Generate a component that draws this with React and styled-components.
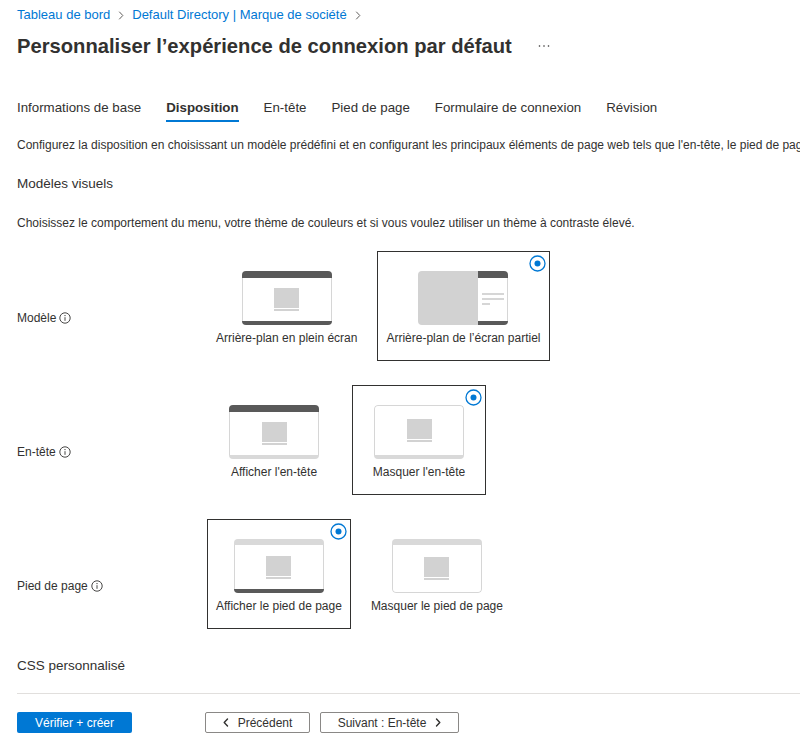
import React from 'react';
import styled, { createGlobalStyle } from 'styled-components';

const GlobalStyle = createGlobalStyle`
  html, body { margin: 0; padding: 0; background: #fff; overflow: hidden; }
  body { font-family: "Liberation Sans", Arial, sans-serif; color: #323130; }
  * { box-sizing: border-box; }
`;

const Page = styled.div`
  width: 1000px;
  padding: 6px 0 0 17px;
`;

const Breadcrumb = styled.nav`
  display: flex;
  align-items: center;
  gap: 8px;
  font-size: 13px;
  line-height: 18px;
  color: #0078d4;
`;

const Crumb = styled.span`
  white-space: nowrap;
`;

const TitleRow = styled.div`
  display: flex;
  align-items: center;
  gap: 26px;
  margin-top: 8px;
`;

const Title = styled.h1`
  margin: 0;
  font-size: 20.2px;
  line-height: 28px;
  font-weight: 600;
  color: #323130;
  white-space: nowrap;
`;

const Tabs = styled.div`
  display: flex;
  gap: 25px;
  margin-top: 39px;
`;

const Tab = styled.div`
  font-size: 13.3px;
  line-height: 18px;
  padding-bottom: 3px;
  border-bottom: 2px solid ${p => (p.$active ? '#0078d4' : 'transparent')};
  font-weight: ${p => (p.$active ? 600 : 400)};
  color: #323130;
  white-space: nowrap;
`;

const Description = styled.p`
  margin: 15px 0 0;
  font-size: 12px;
  line-height: 16px;
  white-space: nowrap;
`;

const SectionTitle = styled.h2`
  margin: ${p => p.$mt}px 0 0;
  font-size: 13.5px;
  line-height: 20px;
  font-weight: 400;
  color: #323130;
`;

const Hint = styled.p`
  margin: 21px 0 0;
  font-size: 12px;
  line-height: 16px;
`;

const Rows = styled.div`
  display: flex;
  flex-direction: column;
  gap: 24px;
  margin-top: 20px;
`;

const Row = styled.div`
  display: flex;
  align-items: flex-start;
`;

const RowLabel = styled.div`
  width: 190px;
  flex: none;
  padding-top: 59px;
  display: flex;
  align-items: center;
  gap: 3px;
  font-size: 12px;
  line-height: 16px;
`;

const Options = styled.div`
  display: flex;
  gap: 11px;
`;

const Card = styled.div`
  position: relative;
  min-width: 134px;
  padding: 19px 8px 14px;
  border: 1px solid ${p => (p.$selected ? '#323130' : 'transparent')};
  display: flex;
  flex-direction: column;
  align-items: center;
`;

const Caption = styled.div`
  margin-top: 5px;
  font-size: 12px;
  line-height: 16px;
  white-space: nowrap;
`;

const RadioMark = styled.svg`
  position: absolute;
  top: 3px;
  right: 3px;
`;

const ThumbFrame = styled.div`
  width: 90px;
  height: 54px;
  border-radius: 4px;
  overflow: hidden;
  display: flex;
  flex-direction: column;
`;

const Bar = styled.div`
  flex: none;
  height: ${p => p.$h}px;
  background: ${p => (p.$tone === 'dark' ? '#595959' : '#d9d9d9')};
`;

const ThumbBody = styled.div`
  flex: 1;
  border-left: 1px solid #d6d6d6;
  border-right: 1px solid #d6d6d6;
  border-top: ${p => (p.$openTop ? '1px solid #d6d6d6' : 'none')};
  border-bottom: ${p => (p.$openBottom ? '1px solid #d6d6d6' : 'none')};
  border-radius: ${p => (p.$openTop ? '4px 4px' : '0 0')} ${p => (p.$openBottom ? '4px 4px' : '0 0')};
  display: flex;
  flex-direction: column;
  align-items: center;
  justify-content: center;
`;

const Square = styled.div`
  width: 25px;
  height: 20px;
  background: #d2d2d2;
`;

const Underline = styled.div`
  width: 25px;
  height: 2px;
  margin-top: 1px;
  background: #d2d2d2;
`;

const PartialFrame = styled.div`
  width: 90px;
  height: 54px;
  display: flex;
`;

const GrayBlock = styled.div`
  width: 60px;
  background: #d2d2d2;
  border-radius: 4px 0 0 4px;
`;

const SidePanel = styled.div`
  flex: 1;
  display: flex;
  flex-direction: column;
  border-radius: 0 4px 4px 0;
  overflow: hidden;
`;

const SideBody = styled.div`
  flex: 1;
  border-right: 1px solid #d6d6d6;
  padding: 15px 0 0 4px;
  display: flex;
  flex-direction: column;
  gap: 3px;
`;

const SideLine = styled.div`
  width: ${p => p.$w}px;
  height: 2px;
  background: #d6d6d6;
`;

const Divider = styled.div`
  margin-top: 17px;
  height: 1px;
  background: #e1dfdd;
`;

const Footer = styled.div`
  display: flex;
  align-items: center;
  margin-top: 18px;
`;

const PrimaryButton = styled.button`
  width: 115px;
  height: 21px;
  border: none;
  border-radius: 2px;
  background: #0078d4;
  color: #fff;
  font-family: inherit;
  font-size: 12px;
  padding: 0;
`;

const NavGroup = styled.div`
  display: flex;
  gap: 10px;
  margin-left: 73px;
`;

const SecondaryButton = styled.button`
  width: ${p => p.$w}px;
  height: 21px;
  border: 1px solid #8a8886;
  border-radius: 2px;
  background: #fff;
  color: #323130;
  font-family: inherit;
  font-size: 12px;
  padding: 0;
  display: flex;
  align-items: center;
  justify-content: center;
  gap: 9px;
`;

const Chevron = ({ dir = 'right', color = '#605e5c', w = 6, h = 9, sw = 1 }) => (
  <svg width={w} height={h} viewBox="0 0 6 9" fill="none">
    <path
      d={dir === 'right' ? 'M1.5 1 L4.8 4.5 L1.5 8' : 'M4.5 1 L1.2 4.5 L4.5 8'}
      stroke={color}
      strokeWidth={sw}
      strokeLinecap="round"
      strokeLinejoin="round"
    />
  </svg>
);

const Ellipsis = () => (
  <svg width="12" height="4" viewBox="0 0 12 4">
    <circle cx="1.5" cy="2" r="0.8" fill="#323130" />
    <circle cx="6" cy="2" r="0.8" fill="#323130" />
    <circle cx="10.5" cy="2" r="0.8" fill="#323130" />
  </svg>
);

const InfoIcon = () => (
  <svg width="12" height="12" viewBox="0 0 12 12" fill="none">
    <circle cx="6" cy="6" r="5.2" stroke="#323130" strokeWidth="0.9" />
    <circle cx="6" cy="3.6" r="0.65" fill="#323130" />
    <path d="M6 5.2 V8.8" stroke="#323130" strokeWidth="0.9" />
  </svg>
);

const Radio = () => (
  <RadioMark width="17" height="17" viewBox="0 0 17 17">
    <circle cx="8.5" cy="8.5" r="7.5" fill="#fff" stroke="#0078d4" strokeWidth="1.3" />
    <circle cx="8.5" cy="8.5" r="3" fill="#0078d4" />
  </RadioMark>
);

const Thumb = ({ top, bottom }) => (
  <ThumbFrame>
    {top !== 'none' && <Bar $h={top === 'dark' ? 7 : 6} $tone={top} />}
    <ThumbBody $openTop={top === 'none'} $openBottom={bottom === 'none'}>
      <Square />
      <Underline />
    </ThumbBody>
    {bottom !== 'none' && <Bar $h={4} $tone={bottom} />}
  </ThumbFrame>
);

const PartialThumb = () => (
  <PartialFrame>
    <GrayBlock />
    <SidePanel>
      <Bar $h={7} $tone="dark" />
      <SideBody>
        <SideLine $w={22} />
        <SideLine $w={22} />
        <SideLine $w={8} />
      </SideBody>
      <Bar $h={4} $tone="dark" />
    </SidePanel>
  </PartialFrame>
);

const rows = [
  {
    label: 'Modèle',
    options: [
      { caption: 'Arrière-plan en plein écran', thumb: { top: 'dark', bottom: 'dark' } },
      { caption: 'Arrière-plan de l’écran partiel', partial: true, selected: true },
    ],
  },
  {
    label: 'En-tête',
    options: [
      { caption: "Afficher l'en-tête", thumb: { top: 'dark', bottom: 'light' } },
      { caption: "Masquer l'en-tête", thumb: { top: 'none', bottom: 'light' }, selected: true },
    ],
  },
  {
    label: 'Pied de page',
    options: [
      { caption: 'Afficher le pied de page', thumb: { top: 'light', bottom: 'dark' }, selected: true },
      { caption: 'Masquer le pied de page', thumb: { top: 'light', bottom: 'none' } },
    ],
  },
];

const tabs = ['Informations de base', 'Disposition', 'En-tête', 'Pied de page', 'Formulaire de connexion', 'Révision'];

export default function App() {
  return (
    <>
      <GlobalStyle />
      <Page>
        <Breadcrumb>
          <Crumb>Tableau de bord</Crumb>
          <Chevron />
          <Crumb>Default Directory | Marque de société</Crumb>
          <Chevron />
        </Breadcrumb>
        <TitleRow>
          <Title>Personnaliser l’expérience de connexion par défaut</Title>
          <Ellipsis />
        </TitleRow>
        <Tabs>
          {tabs.map(t => (
            <Tab key={t} $active={t === 'Disposition'}>
              {t}
            </Tab>
          ))}
        </Tabs>
        <Description>
          Configurez la disposition en choisissant un modèle prédéfini et en configurant les principaux éléments de page web tels que l'en-tête, le pied de page et le formulaire de connexion.
        </Description>
        <SectionTitle $mt={21}>Modèles visuels</SectionTitle>
        <Hint>Choisissez le comportement du menu, votre thème de couleurs et si vous voulez utiliser un thème à contraste élevé.</Hint>
        <Rows>
          {rows.map(r => (
            <Row key={r.label}>
              <RowLabel>
                {r.label}
                <InfoIcon />
              </RowLabel>
              <Options>
                {r.options.map(o => (
                  <Card key={o.caption} $selected={o.selected}>
                    {o.selected && <Radio />}
                    {o.partial ? <PartialThumb /> : <Thumb {...o.thumb} />}
                    <Caption>{o.caption}</Caption>
                  </Card>
                ))}
              </Options>
            </Row>
          ))}
        </Rows>
        <SectionTitle $mt={27}>CSS personnalisé</SectionTitle>
        <Divider />
        <Footer>
          <PrimaryButton>Vérifier + créer</PrimaryButton>
          <NavGroup>
            <SecondaryButton $w={105}>
              <Chevron dir="left" color="#323130" sw={1.4} />
              Précédent
            </SecondaryButton>
            <SecondaryButton $w={139}>
              Suivant : En-tête
              <Chevron dir="right" color="#323130" sw={1.4} />
            </SecondaryButton>
          </NavGroup>
        </Footer>
      </Page>
    </>
  );
}
